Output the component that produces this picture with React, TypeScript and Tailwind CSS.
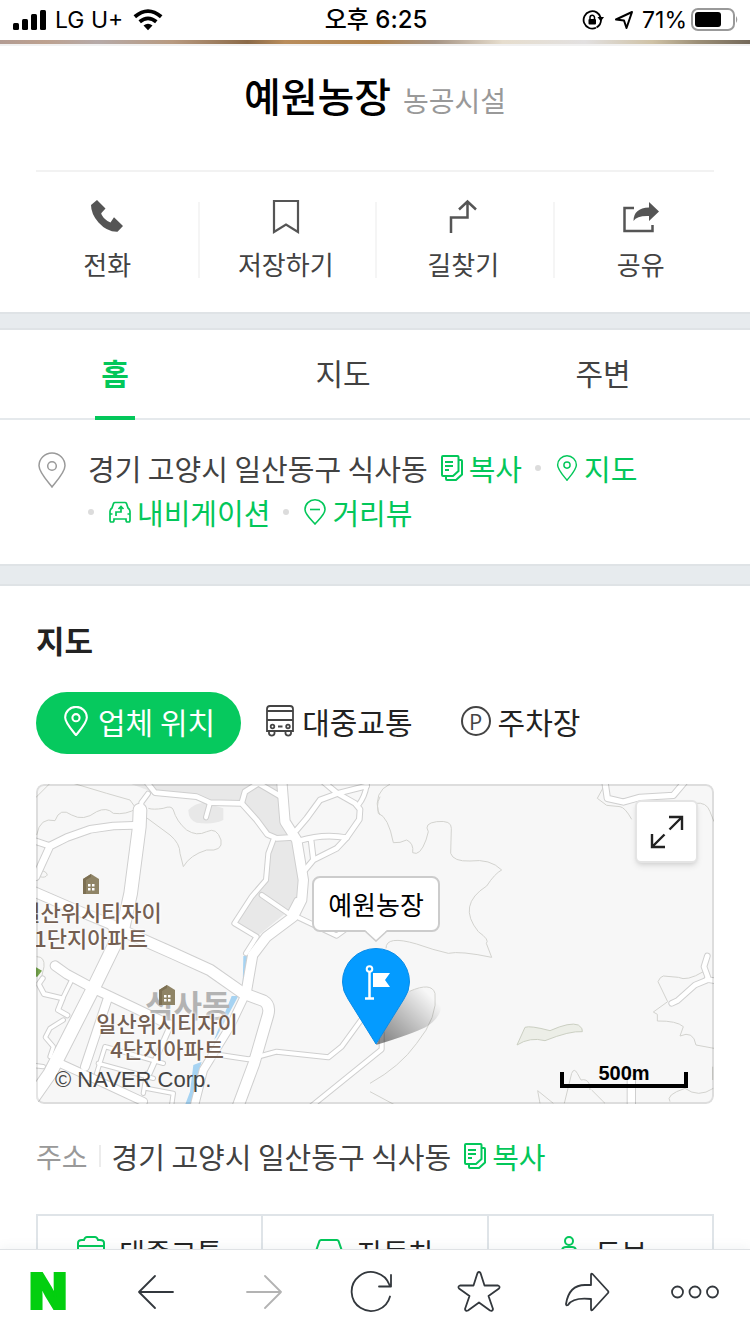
import React, { useState } from 'react';

type IconProps = { className?: string };

const PinIcon = ({ className }: IconProps) => (
  <svg viewBox="0 0 28 36" fill="none" stroke="currentColor" className={className} aria-hidden="true">
    <path d="M14 35C11 31 1 20.500 1 13.800A13 12.800 0 0 1 27 13.800C27 20.500 17 31 14 35Z" />
    <circle cx="14" cy="14" r="4.300" />
  </svg>
);

const StreetPinIcon = ({ className }: IconProps) => (
  <svg viewBox="0 0 22 26" fill="none" stroke="currentColor" strokeWidth="1.600" className={className} aria-hidden="true">
    <path d="M11 25C8 21.500 1 15.500 1 10.500A10 9.700 0 0 1 21 10.500C21 15.500 14 21.500 11 25Z" />
    <path d="M6 10.500H16" />
  </svg>
);

const CopyIcon = ({ className }: IconProps) => (
  <svg viewBox="0 0 22 26" fill="none" stroke="currentColor" strokeWidth="2" className={className} aria-hidden="true">
    <path d="M2 1H16.500Q17.500 1 17.500 2V16L12 21H2Q1 21 1 20V2Q1 1 2 1Z" />
    <path d="M18 5H20Q21 5 21 6V19.500L15 25H6Q5 25 5 24V21.500" />
    <path d="M4 7H12M4 11H12M4 15H8" />
  </svg>
);

const NaviIcon = ({ className }: IconProps) => (
  <svg viewBox="0 0 22 22" fill="none" stroke="currentColor" strokeWidth="1.700" className={className} aria-hidden="true">
    <path d="M6 1.500H16Q17 1.500 17.500 2.500L19 7Q21 8.500 21 10.500V19Q21 21 19.500 21H18.500Q17 21 17 19V18H5V19Q5 21 3.500 21H2.500Q1 21 1 19V10.500Q1 8.500 3 7L4.500 2.500Q5 1.500 6 1.500Z" />
    <path d="M7 15V11H12V6M9.500 8L12 5.500L14.500 8M1 13H3.500M18.500 13H21" />
  </svg>
);

const BusIcon = ({ className }: IconProps) => (
  <svg viewBox="0 0 28 32" fill="none" stroke="currentColor" strokeWidth="1.800" className={className} aria-hidden="true">
    <path d="M1 26V4Q1 1 4 1H24Q27 1 27 4V26ZM1 6H27M1 15H27M3 26V28.500A2.800 2.500 0 0 0 8.500 28.500V26M19.500 26V28.500A2.800 2.500 0 0 0 25 28.500V26M12 21.500H16.500" />
    <circle cx="6.500" cy="21.500" r="1.800" />
    <circle cx="22" cy="21.500" r="1.800" />
  </svg>
);

const PhoneIcon = () => (
  <svg viewBox="0 0 36 36" fill="#555" className="size-9" aria-hidden="true">
    <path d="M8 1L16.500 9.500L12.200 14.200Q12.500 16.500 16 20Q19 23 21.500 23.500L25 18.300L34 27L28.500 32.700Q18 33 9.500 23.500Q2 15 2 6Z" />
  </svg>
);

const BookmarkIcon = () => (
  <svg viewBox="0 0 36 36" fill="none" stroke="#555" strokeWidth="2.200" className="size-9" aria-hidden="true">
    <path d="M6 2H30V33L18 25.500L6 33Z" />
  </svg>
);

const RouteIcon = () => (
  <svg viewBox="0 0 36 36" fill="none" stroke="#555" strokeWidth="2.500" className="size-9" aria-hidden="true">
    <path d="M6 34V18.500H22.500V2.500M14 10.500L22.500 2.500L31 10.500" />
  </svg>
);

const ShareIcon = () => (
  <svg viewBox="0 0 36 36" fill="none" stroke="#555" strokeWidth="2.500" className="size-9" aria-hidden="true">
    <path d="M11 9H1.500V32H29.500V26" />
    <path d="M26 3L36 12.500L26 22V17Q14 16.500 10.500 22Q10.500 9 26 8.500Z" fill="#555" stroke="none" />
  </svg>
);

const StatusBar = () => (
  <header className="grid h-10 shrink-0 grid-cols-3 items-center bg-white pl-[13px] pr-[11px] font-['Inter','Noto_Sans_CJK_KR',sans-serif] text-[23px] text-black">
    <div className="flex items-center">
      <svg viewBox="0 0 34 22" className="mr-2 h-[22px] w-[34px]" aria-hidden="true">
        <rect x="0" y="14" width="6" height="7" rx="1.500" />
        <rect x="9" y="10" width="6" height="11" rx="1.500" />
        <rect x="18" y="5" width="6" height="16" rx="1.500" />
        <rect x="27" y="1" width="6" height="20" rx="1.500" />
      </svg>
      <span>LG U+</span>
      <svg viewBox="0 0 30 22" fill="none" stroke="#000" strokeWidth="3.800" className="ml-2.5 h-[22px] w-[30px]" aria-hidden="true">
        <path d="M1.800 7.800Q15 -3.500 28.200 7.800M6.700 12.800Q15 6 23.300 12.800" />
        <path d="M10.500 16.500Q15 13 19.500 16.500L15 21.300Z" fill="#000" stroke="none" />
      </svg>
    </div>
    <time className="text-center text-2xl font-medium">오후 6:25</time>
    <div className="flex items-center justify-end">
      <svg viewBox="0 0 22 22" fill="none" stroke="#000" strokeWidth="1.800" className="mr-2.5 size-[22px]" aria-hidden="true">
        <path d="M14 18.800A8.700 8.700 0 1 1 18.800 9" />
        <path d="M19 10.500A9 9 0 0 1 14.500 18.500" />
        <path d="M15.500 8H22L18.800 12.500Z" fill="#000" stroke="none" />
        <rect x="6.500" y="10" width="7.500" height="5.500" rx="1" fill="#000" stroke="none" />
        <path d="M8 10V8.500A2.200 2.200 0 0 1 12.500 8.500V10" strokeWidth="1.500" />
      </svg>
      <svg viewBox="0 0 20 20" fill="none" stroke="#000" strokeWidth="2" strokeLinejoin="round" className="mr-2 size-5" aria-hidden="true">
        <path d="M18 2L12.500 18L10 10.500L2 9.500Z" />
      </svg>
      <span>71%</span>
      <svg viewBox="0 0 48 24" className="ml-1 h-6 w-12" aria-hidden="true">
        <rect x="1" y="1" width="42" height="21" rx="6" fill="none" stroke="#999" strokeWidth="2" />
        <rect x="4" y="4" width="26" height="15" rx="3" />
        <path d="M45 8Q47.500 11.500 45 15Z" fill="#999" />
      </svg>
    </div>
  </header>
);

const ACTIONS = [
  { label: '전화', icon: <PhoneIcon /> },
  { label: '저장하기', icon: <BookmarkIcon /> },
  { label: '길찾기', icon: <RouteIcon /> },
  { label: '공유', icon: <ShareIcon /> },
];

const PlaceHeader = () => (
  <section>
    {/* Bottom edge of the cover photo */}
    <div className="h-1 bg-[linear-gradient(90deg,#b39c93,#bda18f_6%,#b6aaa8_13%,#b89a80_23%,#8b6a48_33%,#b98d5c_38%,#b0834e_50%,#a69484_58%,#e6ddcd_67%,#e2e0e0_78%,#cfc2a6_87%,#9c8f77_93%,#74695a)]" />
    <div className="h-0.5 bg-[#f1f1f1]" />
    <div className="mx-9 flex h-[126px] items-baseline justify-center gap-3 border-b-2 border-[#f2f2f2] pt-5">
      <h1 className="text-[40px] font-medium leading-[58px] text-black">예원농장</h1>
      <span className="text-[28px] text-[#999]">농공시설</span>
    </div>
    <div className="grid h-[140px] grid-cols-4 px-5 pt-[30px]">
      {ACTIONS.map((action, index) => (
        <button
          key={action.label}
          type="button"
          className={`flex h-[76px] flex-col items-center pr-[3px] text-[26px] leading-9 text-[#424242] ${
            index > 0 ? 'border-l-2 border-[#f5f5f5]' : ''
          }`}
        >
          <span className="-mt-[3px] mb-[11px]">{action.icon}</span>
          {action.label}
        </button>
      ))}
    </div>
  </section>
);

const Tabs = () => {
  const [active, setActive] = useState('홈');

  return (
    <nav className="grid h-[90px] grid-cols-[230fr_226fr_294fr] border-b-2 border-[#e5e9ec]">
      {['홈', '지도', '주변'].map((tab) => (
        <button
          key={tab}
          type="button"
          onClick={() => setActive(tab)}
          className={`flex flex-col items-center justify-between pt-5 text-[30px] leading-[44px] ${
            active === tab ? 'font-bold text-[#03c75a]' : 'text-[#424242]'
          }`}
        >
          {tab}
          {active === tab && <span className="-mb-0.5 h-1 w-10 bg-[#03c75a]" />}
        </button>
      ))}
    </nav>
  );
};

const Dot = () => <span className="mr-[15px] size-1.5 shrink-0 rounded-full bg-[#dcdcdc]" />;

const CopyButton = () => (
  <button type="button" className="flex items-center gap-1.5 text-[#03c75a]">
    <CopyIcon className="h-[26px] w-[22px]" />
    복사
  </button>
);

const AddressLinks = () => (
  <section className="flex px-9 pb-[30px] pt-[26px]">
    <PinIcon className="ml-0.5 mr-[22px] mt-1.5 h-9 w-7 shrink-0 stroke-[1.500] text-[#9a9a9a]" />
    <div className="flex flex-wrap items-center gap-x-[13px] text-[29px] leading-[44px]">
      <span className="text-[#424242]">경기 고양시 일산동구 식사동</span>
      <CopyButton />
      <div className="flex items-center">
        <Dot />
        <a href="#map" className="flex items-center gap-1.5 text-[#03c75a]">
          <PinIcon className="h-[26px] w-[22px] stroke-2" />
          지도
        </a>
      </div>
      <div className="flex items-center">
        <Dot />
        <a href="#navigation" className="flex items-center gap-1.5 text-[#03c75a]">
          <NaviIcon className="size-[22px]" />
          내비게이션
        </a>
      </div>
      <div className="flex items-center">
        <Dot />
        <a href="#street" className="flex items-center gap-1.5 text-[#03c75a]">
          <StreetPinIcon className="h-[26px] w-[22px]" />
          거리뷰
        </a>
      </div>
    </div>
  </section>
);

const ROADS = [
  { w: 38, d: 'M330 90L328 140L302 340L280 440L190 625L60 880L-10 980' },
  { w: 12, d: 'M354 41L334 68V90' },
  { w: 20, d: 'M310 136L250 138L180 148L110 173L60 198L18 290' },
  { w: 16, d: 'M0 178L60 198' },
  { w: 28, d: 'M0 330L120 382L260 440' },
  { w: 32, d: 'M250 440L430 520L540 570L640 640L700 662Q722 675 714 705L672 850L620 990' },
  { w: 26, d: 'M75 557L110 582L190 625L310 682L420 735' },
  { w: 22, d: 'M90 850L200 900L340 965' },
  { w: 24, d: 'M235 650L165 860' },
  { w: 14, d: 'M420 740L358 880' },
  { w: 12, d: 'M38 595L26 612L42 642L98 655L84 690L112 706' },
  { w: 10, d: 'M100 720L60 745L46 772L70 800L60 830' },
  { w: 10, d: 'M125 600L98 655M0 855L40 860' },
  { w: 10, d: 'M225 800L400 850M205 850L370 895M225 800L200 880M350 880L340 940M350 925L430 940L425 975' },
  { w: 28, d: 'M755 0L765 125L800 180L820 300L815 360L790 410L710 470L668 525L648 640' },
  { w: 22, d: 'M648 640L600 740L520 870L490 990' },
  { w: 14, d: 'M345 0L375 38L500 50L540 68L635 70L680 120L712 163L740 175L790 172' },
  { w: 12, d: 'M540 68L528 112' },
  { w: 14, d: 'M635 70L645 35L685 10L750 48' },
  { w: 14, d: 'M800 150L830 115L870 60L930 38L1010 18' },
  { w: 14, d: 'M880 5L922 40L975 70L990 88L988 118L950 173L920 205L850 240L825 270' },
  { w: 12, d: 'M1010 15Q1005 50 985 75' },
  { w: 14, d: 'M808 182Q880 160 950 173M843 178L850 238' },
  { w: 12, d: 'M730 180L715 220L708 300L665 350L613 430L680 470L648 520' },
  { w: 12, d: 'M695 345L778 402L800 360M800 410L920 467L950 445' },
  { w: 12, d: 'M570 825L655 838L740 815L895 832L935 800L1015 690' },
  { w: 12, d: 'M830 990L1055 808V760' },
  { w: 16, d: 'M1724 0L1732 55L1780 66L1830 52L1930 46L1962 8' },
  { w: 14, d: 'M2032 528L2022 560L2036 598L1995 615L1942 662L1925 670M2030 598L2060 603' },
  { w: 22, d: 'M1804 900V990' },
];

const CONTOURS_WEST =
  'M15 55L60 10M130 10L230 40L300 60L325 95L420 165Q450 190 450 220L460 260Q480 225 530 210Q580 215 573 180Q560 140 530 155Q500 170 470 150Q440 125 430 90Q425 75 400 85Q370 90 355 85' +
  'M20 165Q30 110 75 122Q90 80 125 105Q160 125 200 95Q230 80 250 100Q290 105 320 85' +
  'M15 270Q50 270 52 285Q45 295 30 290M20 530Q45 530 42 560L35 590M1050 50Q1035 80 1050 105';

const CONTOURS_EAST =
  'M60 12Q10 35 25 100Q55 110 70 188Q90 190 110 180Q132 190 128 218Q150 230 168 180L175 155Q160 130 200 125Q245 120 244 145L242 220Q250 245 300 243Q360 235 395 270Q375 280 350 318Q260 375 325 455Q360 480 349 490L365 532Q270 512 235 520Q190 510 140 492Q48 465 48 505' +
  'M118 634Q185 605 195 640Q205 710 140 790Q90 860 0 910M0 935L75 975' +
  'M700 22L682 55L710 76L750 80Q765 82 785 118M975 70Q1010 65 1020 95L1032 125' +
  'M1000 575Q950 605 925 592L880 588Q870 590 864 605L893 665L850 696L862 703V723Q920 722 940 740L930 768Q970 750 978 795L1032 805' +
  'M583 970L605 880Q612 862 622 880L633 900Q650 895 658 912L660 930M665 930L705 970M503 932L550 970M503 932L510 970M900 965Q885 945 945 925Q985 955 1030 925M1028 860V900';

const BuildingIcon = () => (
  <svg viewBox="0 0 16 20" className="h-5 w-4" aria-hidden="true">
    <path d="M0 5L8 0L16 5V20H0Z" fill="#8f8466" />
    <path d="M0 5L8 0V3L3 6V20H0Z" fill="#7d7053" />
    <path d="M5 10H7.500V12.500H5ZM9 10H11.500V12.500H9ZM5 14H7.500V16.500H5ZM9 14H11.500V16.500H9Z" fill="#fff" />
  </svg>
);

const MapView = () => (
  <div id="map" className="relative mt-[30px] h-80 overflow-hidden rounded-lg bg-[#f7f7f7]">
    <svg viewBox="18 12 2034 960" preserveAspectRatio="xMidYMid slice" fill="none" className="size-full" aria-hidden="true">
      <path d="M270 0H750L762 125L795 172H735L700 150L640 70L540 66L375 38Z" fill="#e8e8e8" />
      <path d="M732 180H790L815 300L800 380L760 405L680 470L613 430L708 300Z" fill="#e8e8e8" />
      <path d="M475 90Q500 65 530 70L580 85V120Q550 135 500 128Q475 120 475 90Z" fill="#e8e8e8" />
      <path d="M640 528H660L638 620ZM605 648H625L560 770L552 780ZM490 855L515 845L496 910L485 975H465L480 935Z" fill="#a6d3f2" />
      <path d="M15 560L36 572L22 590H15Z" fill="#75a54d" />
      <path d="M1461 795L1485 742Q1500 736 1560 752Q1620 725 1645 735Q1660 745 1657 755Q1620 752 1545 782Q1500 770 1461 795Z" fill="#eceee7" stroke="#cbcfc2" strokeWidth="3" />
      <g stroke="#d2d2ce" strokeWidth="3">
        <path d={CONTOURS_WEST} />
        <path d={CONTOURS_EAST} transform="translate(1020 0)" />
      </g>
      <g stroke="#cfcfcf" strokeLinecap="round" strokeLinejoin="round">
        {ROADS.map((road) => (
          <path key={road.d} d={road.d} strokeWidth={road.w + 6} />
        ))}
      </g>
      <g stroke="#fff" strokeLinecap="round" strokeLinejoin="round">
        {ROADS.map((road) => (
          <path key={road.d} d={road.d} strokeWidth={road.w} />
        ))}
      </g>
    </svg>

    <span className="absolute left-[109px] top-[200px] text-[31px] font-bold leading-10 text-[#b3b3b3]">식사동</span>
    <div className="absolute -left-[18px] top-[90px] flex w-[146px] flex-col items-center text-center text-[22px] font-medium leading-[26px] text-[#745f52] [text-shadow:0_0_2px_#fff,0_0_3px_#fff,0_0_4px_#fff]">
      <BuildingIcon />
      <span className="mt-1">일산위시티자이<br />1단지아파트</span>
    </div>
    <div className="absolute left-[58px] top-[201px] flex w-[146px] flex-col items-center text-center text-[22px] font-medium leading-[26px] text-[#745f52] [text-shadow:0_0_2px_#fff,0_0_3px_#fff,0_0_4px_#fff]">
      <BuildingIcon />
      <span className="mt-1">일산위시티자이<br />4단지아파트</span>
    </div>

    {/* Marker and its callout */}
    <svg viewBox="0 0 104 100" className="absolute left-[304px] top-[163px] h-[100px] w-[104px]" aria-hidden="true">
      <defs>
        <linearGradient id="pin-shadow" x1="0.100" y1="0.900" x2="0.900" y2="0.200">
          <stop offset="0" stopColor="#000" stopOpacity="0.450" />
          <stop offset="1" stopColor="#000" stopOpacity="0" />
        </linearGradient>
      </defs>
      <path d="M36 98L62 48Q88 34 98 48Q108 66 86 80Q72 87 36 98Z" fill="url(#pin-shadow)" />
      <path d="M36 97L8 52Q2.500 44 2.500 35A33.500 33.500 0 0 1 69.500 35Q69.500 44 64 52Z" fill="#049bff" stroke="#0a8be6" strokeWidth="1" />
      <g fill="none" stroke="#fff" strokeWidth="2">
        <circle cx="29.500" cy="22" r="2.800" />
        <path d="M29.500 25V51M25 51.500H34" strokeWidth="2.500" />
      </g>
      <path d="M33 26H50L45 33L50 40H33Z" fill="#fff" />
    </svg>
    <div className="absolute left-[276px] top-[92px] flex h-14 w-32 items-center justify-center rounded-lg border-2 border-[#ccc] bg-white pb-0.5 text-[26px] text-black">
      예원농장
      <svg viewBox="0 0 22 12" className="absolute -bottom-3 left-[51px] h-3 w-[22px]" aria-hidden="true">
        <path d="M0 0L11 10.500L22 0Z" fill="#fff" />
        <path d="M0 1L11 11L22 1" fill="none" stroke="#ccc" strokeWidth="1.600" />
      </svg>
    </div>

    <button
      type="button"
      aria-label="지도 확대"
      className="absolute right-4 top-4 flex size-[63px] items-center justify-center rounded-md border-2 border-[#e4e4e4] bg-white shadow-md"
    >
      <svg viewBox="0 0 34 34" fill="none" stroke="#222" strokeWidth="2.400" className="size-[34px]" aria-hidden="true">
        <path d="M19 2H32V15M32 2L19.500 14.500M2 19V32H15M2 32L14.500 19.500" />
      </svg>
    </button>
    <span className="absolute bottom-2.5 left-[19px] font-['Liberation_Sans',sans-serif] text-[22px] leading-7 text-[#444]">
      © NAVER Corp.
    </span>
    <div className="absolute bottom-4 right-[26px] h-4 w-32 border-4 border-t-0 border-black">
      <span className="absolute inset-x-0 -top-[11px] text-center font-['Liberation_Sans',sans-serif] text-xl font-bold leading-6 text-black">
        500m
      </span>
    </div>
    <div className="pointer-events-none absolute inset-0 rounded-lg border-2 border-black/10" />
  </div>
);

const MapSection = () => (
  <section className="px-9 pt-8">
    <h2 className="text-[31px] font-bold leading-[44px] text-[#222]">지도</h2>
    <div className="mt-[30px] flex h-[62px] text-[30px] leading-[44px] text-[#222]">
      <button type="button" className="flex items-center gap-2.5 rounded-full bg-[#06c95e] pb-1 pl-7 pr-[26px] text-white">
        <PinIcon className="h-[30px] w-6 stroke-[2.500]" />
        업체 위치
      </button>
      <button type="button" className="flex items-center gap-2 pb-1 pl-[25px] pr-6">
        <BusIcon className="h-8 w-7 text-[#444]" />
        대중교통
      </button>
      <button type="button" className="flex items-center gap-[7px] px-6 pb-1">
        <span className="flex size-[30px] items-center justify-center rounded-full border-2 border-[#444] font-['Open_Sans',sans-serif] text-[22px] text-[#444]">
          P
        </span>
        주차장
      </button>
    </div>
    <MapView />
    <div className="mt-[30px] flex items-center text-[29px] leading-[44px]">
      <span className="text-[28px] text-[#999]">주소</span>
      <span className="mx-[11px] h-[22px] w-0.5 bg-[#ececec]" />
      <span className="mr-[13px] text-[#424242]">경기 고양시 일산동구 식사동</span>
      <CopyButton />
    </div>
    <div className="mt-9 grid grid-cols-3 border-y-2 border-r-2 border-[#dfe4e8] text-[28px] text-[#222]">
      <a href="#transit" className="flex h-[72px] items-center justify-center gap-3.5 border-l-2 border-[#dfe4e8]">
        <svg viewBox="0 0 28 32" fill="none" stroke="#03c75a" strokeWidth="2" className="h-8 w-7" aria-hidden="true">
          <path d="M1 28V7Q1 4 5 4H7Q8 1 10 1H18Q20 1 21 4H23Q27 4 27 7V28ZM1 10H27M1 18H27M5 28V31M23 28V31" />
        </svg>
        대중교통
      </a>
      <a href="#car" className="flex h-[72px] items-center justify-center gap-3.5 border-l-2 border-[#dfe4e8]">
        <svg viewBox="0 0 28 26" fill="none" stroke="#03c75a" strokeWidth="2" className="h-[26px] w-7" aria-hidden="true">
          <path d="M1 12L4.500 2Q5 1 6 1H22Q23 1 23.500 2L27 12V25H1ZM1 12H27M5 18H9M19 18H23" />
        </svg>
        자동차
      </a>
      <a href="#walk" className="flex h-[72px] items-center justify-center gap-3.5 border-l-2 border-[#dfe4e8]">
        <svg viewBox="0 0 28 32" fill="none" stroke="#03c75a" strokeWidth="2" className="h-8 w-7" aria-hidden="true">
          <circle cx="15" cy="5" r="4" />
          <path d="M8 22V15Q8 11 12 11H18Q22 11 22 15V22M12 17V31M18 17V31" />
        </svg>
        도보
      </a>
    </div>
  </section>
);

const NAV_ICONS = [
  { label: '뒤로', color: 'text-[#33383d]', d: 'M41 24H7M23 8L7 24L23 40' },
  { label: '앞으로', color: 'text-[#b3b3b3]', d: 'M7 24H41M25 8L41 24L25 40' },
  { label: '새로고침', color: 'text-[#33383d]', d: 'M43 28.500A19.500 19.500 0 1 1 42.500 17M44 7V18.500H32' },
  {
    label: '즐겨찾기',
    color: 'text-[#33383d]',
    d: 'M22.500 5Q24 3 25.500 5L29.500 17.500H43Q45.500 18.500 44 20.500L33.500 28L38 41Q37.500 43.500 35 42.500L24 34.500L13 42.500Q10.500 43.500 10 41L14.500 28L4 20.500Q2.500 18.500 5 17.500H18.500Z',
  },
  {
    label: '공유하기',
    color: 'text-[#33383d]',
    d: 'M28 7Q28 5 29.500 6L45 23Q46 24 45 25L29.500 42Q28 43 28 41V31Q10 29 5 37Q3 38 3 36Q6 17 22 17H28Z',
  },
];

const BottomBar = () => (
  <nav className="z-10 flex h-[85px] shrink-0 items-center justify-between border-t border-[#dfe2e5] bg-white pl-6 pr-[31px] shadow-[0_-2px_10px_rgba(90,110,130,0.080)]">
    <a href="#naver" className="w-12 text-center font-['Inter',sans-serif] text-[49px] font-black leading-[50px] text-[#03cf0f] [-webkit-text-stroke:2px_#03cf0f]">
      N
    </a>
    {NAV_ICONS.map((icon) => (
      <button key={icon.label} type="button" aria-label={icon.label} className={icon.color}>
        <svg viewBox="0 0 48 48" fill="none" stroke="currentColor" strokeWidth="1.800" strokeLinejoin="round" strokeLinecap="round" className="size-12">
          <path d={icon.d} />
        </svg>
      </button>
    ))}
    <button type="button" aria-label="더보기" className="text-[#33383d]">
      <svg viewBox="0 0 48 48" fill="none" stroke="currentColor" strokeWidth="1.800" className="size-12">
        <circle cx="6.500" cy="24" r="5.500" />
        <circle cx="24" cy="24" r="5.500" />
        <circle cx="41.500" cy="24" r="5.500" />
      </svg>
    </button>
  </nav>
);

export default function App() {
  return (
    <div className="flex h-screen flex-col bg-white font-['Noto_Sans_CJK_KR',sans-serif]">
      <StatusBar />
      <main className="min-h-0 flex-1 overflow-y-auto [scrollbar-width:none]">
        <PlaceHeader />
        <div className="h-[18px] border-y-2 border-[#dfe3e6] bg-[#e7ebee]" />
        <Tabs />
        <AddressLinks />
        <div className="h-[22px] border-y-2 border-[#dfe3e6] bg-[#e7ebee]" />
        <MapSection />
      </main>
      <BottomBar />
    </div>
  );
}
